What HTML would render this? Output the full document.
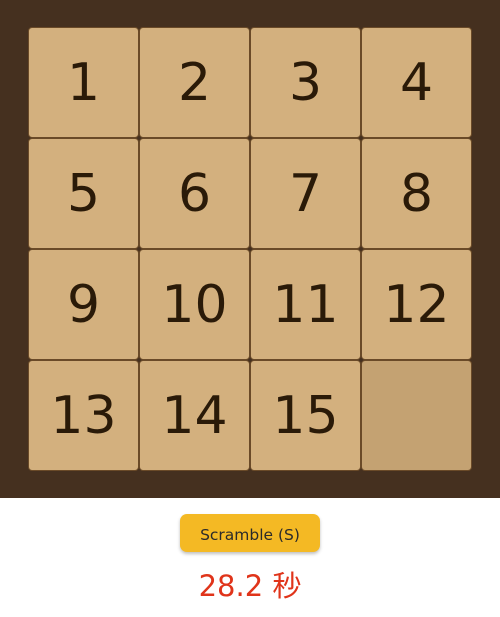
<!DOCTYPE html>
<html><head><style>
body{margin:0;width:500px;height:617px;background:#fff;font-family:"DejaVu Sans","Noto Sans CJK JP",sans-serif;overflow:hidden}
#b{position:absolute;left:0;top:0;width:500px;height:498px;background:#45301f}
.t{position:absolute;width:109px;height:109px;background:#d3b07e;border:1px solid #6a4a28;border-radius:4px;color:#2a1a08;font-size:52px;text-align:center;line-height:110px;box-sizing:content-box}
.e{background:#c4a272}
#btn{position:absolute;left:180px;top:514px;width:140px;height:38px;background:#f4b924;border-radius:7px;box-shadow:0 2px 3px rgba(0,0,0,.25);font-size:15.5px;color:#2a2a2a;text-align:center;line-height:42px}
#tm{position:absolute;left:0;width:500px;top:563px;text-align:center;font-size:29px;color:#e0341a}
</style></head><body>
<div id="b">
<div class="t" style="left:28px;top:27px">1</div><div class="t" style="left:139px;top:27px">2</div><div class="t" style="left:250px;top:27px">3</div><div class="t" style="left:361px;top:27px">4</div>
<div class="t" style="left:28px;top:138px">5</div><div class="t" style="left:139px;top:138px">6</div><div class="t" style="left:250px;top:138px">7</div><div class="t" style="left:361px;top:138px">8</div>
<div class="t" style="left:28px;top:249px">9</div><div class="t" style="left:139px;top:249px">10</div><div class="t" style="left:250px;top:249px">11</div><div class="t" style="left:361px;top:249px">12</div>
<div class="t" style="left:28px;top:360px">13</div><div class="t" style="left:139px;top:360px">14</div><div class="t" style="left:250px;top:360px">15</div><div class="t e" style="left:361px;top:360px"></div>
</div>
<div id="btn">Scramble (S)</div>
<div id="tm">28.2 秒</div>
</body></html>
